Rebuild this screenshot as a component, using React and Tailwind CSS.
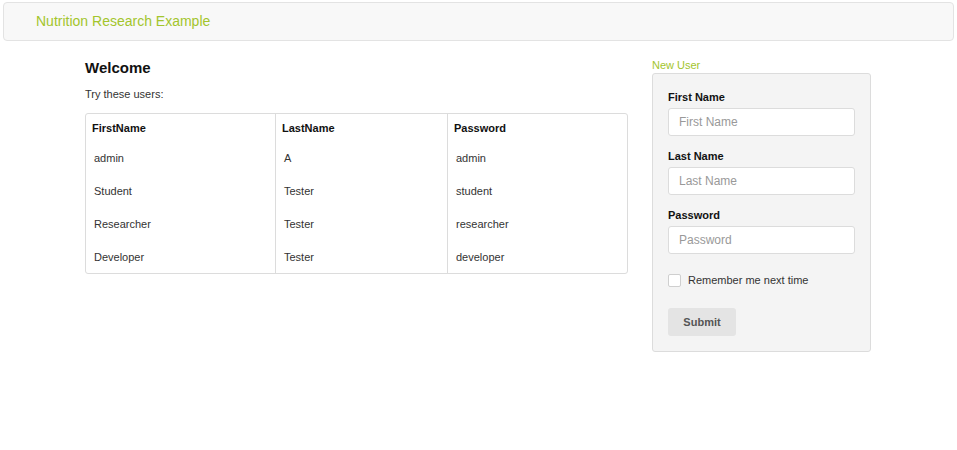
import React from "react";

const rows = [
  ["admin", "A", "admin"],
  ["Student", "Tester", "student"],
  ["Researcher", "Tester", "researcher"],
  ["Developer", "Tester", "developer"],
];

function Field({ label, placeholder, type = "text" }) {
  return (
    <div>
      <div className="h-[14px] leading-[14px] text-[11px] font-bold text-[#111]">{label}</div>
      <input
        type={type}
        placeholder={placeholder}
        className="mt-[4px] block h-[28px] w-[187px] rounded-[3px] border border-[#dcdcdc] bg-white px-[10px] text-[12px] text-[#333] placeholder:text-[#999] outline-none"
      />
    </div>
  );
}

export default function App() {
  return (
    <div className="min-h-[450px] bg-white font-['Liberation_Sans',Arial,sans-serif] text-[#333]">
      <div className="px-[3px] pt-[2px]">
        <div className="flex h-[39px] items-center rounded-[4px] border border-[#e3e3e3] bg-[#f8f8f8] pl-[32px]">
          <span className="text-[14px] text-[#a3c52c]">Nutrition Research Example</span>
        </div>
      </div>

      <div className="flex pl-[85px] pt-[17px]">
        <div className="w-[543px]">
          <h1 className="mt-[1px] h-[18px] leading-[18px] text-[15px] font-bold text-[#111]">Welcome</h1>
          <p className="mt-[10px] h-[14px] leading-[14px] text-[11px] text-[#333]">Try these users:</p>
          <div className="mt-[12px] grid grid-cols-[189px_172px_1fr] rounded-[3px] border border-[#dcdcdc] text-[11px]">
            {[0, 1, 2].map((c) => (
              <div key={c} className={c > 0 ? "border-l border-[#dcdcdc]" : ""}>
                <div className="flex h-[28px] items-center pl-[6px] pt-[1px] font-bold text-[#111]">
                  {["FirstName", "LastName", "Password"][c]}
                </div>
                {rows.map((r, i) => (
                  <div key={i} className="flex h-[32.8px] items-center pl-[8px] text-[#333]">
                    {r[c]}
                  </div>
                ))}
              </div>
            ))}
          </div>
        </div>

        <div className="ml-[24px] w-[219px]">
          <div className="h-[14px] leading-[14px] text-[11px] text-[#a3c52c]">New User</div>
          <div className="mt-[1px] rounded-[3px] border border-[#dcdcdc] bg-[#f4f4f4] px-[15px] pt-[16px] pb-[15px]">
            <Field label="First Name" placeholder="First Name" />
            <div className="mt-[13px]">
              <Field label="Last Name" placeholder="Last Name" />
            </div>
            <div className="mt-[13px]">
              <Field label="Password" placeholder="Password" type="password" />
            </div>
            <label className="mt-[20px] flex h-[13px] items-center">
              <span className="h-[13px] w-[13px] rounded-[2px] border border-[#cfcfcf] bg-white"></span>
              <span className="ml-[7px] text-[11px] text-[#333]">Remember me next time</span>
            </label>
            <button className="mt-[21px] block h-[28px] w-[68px] rounded-[3px] bg-[#e4e4e4] text-[11px] font-bold text-[#555]">
              Submit
            </button>
          </div>
        </div>
      </div>
    </div>
  );
}
